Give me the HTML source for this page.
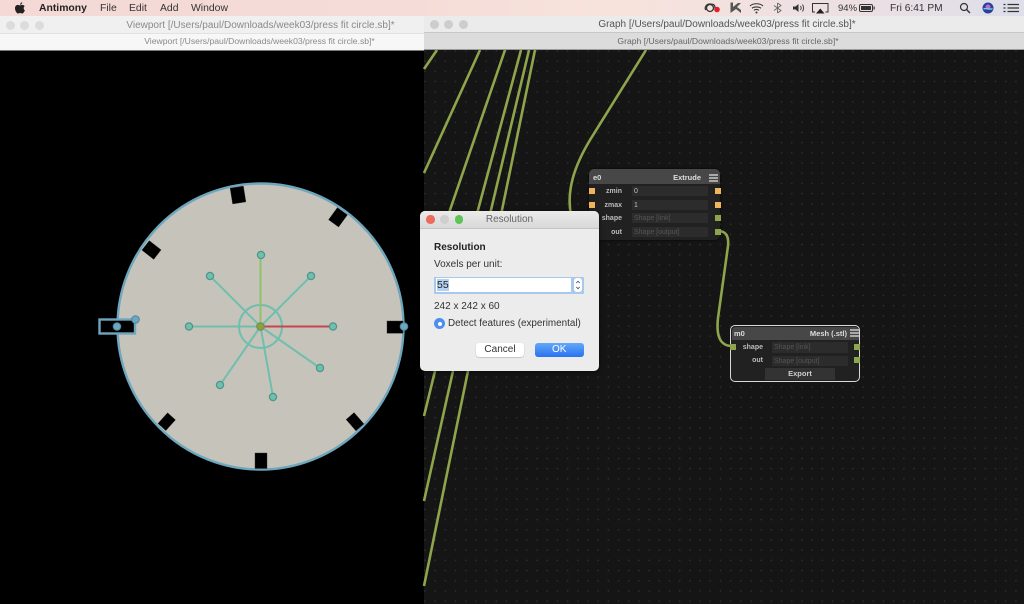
<!DOCTYPE html>
<html><head><meta charset="utf-8"><style>
html,body{margin:0;padding:0;width:1024px;height:604px;overflow:hidden;background:#000;font-family:"Liberation Sans",sans-serif}
#w{position:absolute;left:0;top:0;width:1024px;height:604px;overflow:hidden;filter:blur(.3px)}
.a{position:absolute;white-space:nowrap}
#menu{left:0;top:0;width:1024px;height:16px;background:linear-gradient(90deg,#f4d9d6 0%,#f5dcd8 40%,#f8e3dc 60%,#ebdfe3 85%,#dcdfe9 100%)}
.m{top:2px;font-size:10.4px;line-height:13px;color:#333}
.t{text-align:center;color:#777}
.dot{position:absolute;border-radius:50%}
.lab{position:absolute;text-align:right;font-size:7px;font-weight:bold;color:#bdbdbd;line-height:10px}
.f{position:absolute;background:#2c2c2c;font-size:7px;color:#c0c0c0;line-height:10px;padding-left:2px;box-sizing:border-box}
.f.g{color:#555}
.p{position:absolute;width:6px;height:6px}
.o{background:#efb45e}.gr{background:#8ea54c}
.ham{position:absolute;width:9px;height:2px;background:#a9a9a9}
</style></head><body><div id="w">
<div class="a" style="left:0;top:50px;width:424px;height:554px;background:#000"></div>

<!-- graph -->
<div class="a" style="left:424px;top:50px;width:600px;height:554px;background-color:#151515;background-image:radial-gradient(circle at 1px 1px,#2c2c2c .7px,transparent 1px);background-size:10.2px 10.2px"></div>
<svg class="a" style="left:0;top:0" width="1024" height="604" fill="none">
<g stroke="#8ea54c" stroke-width="2.6">
<path d="M437 50L424 69"/>
<path d="M480 50L424 173"/>
<path d="M505 50L450 210L424 300"/>
<path d="M521 50L478 210L435 371L424 416"/>
<path d="M529 50L491 210L453 371L424 501"/>
<path d="M535 50L502 210L468 371L424 586"/>
<path d="M646 50L590 140C575 165 566 190 571 215"/>
<path d="M718 231C726 231 729 236 728 246L718 318C716 336 720 346 732 346"/>
</g>
</svg>

<!-- viewport drawing -->
<svg class="a" style="left:0;top:50px" width="424" height="554">
<g transform="translate(0,-50)">
<circle cx="260.500" cy="326.500" r="143" fill="#c6c3bb" stroke="#6ea6bd" stroke-width="2.400"/>
<g fill="#000" stroke="#333" stroke-width=".4">
<rect x="-6.700" y="-8" width="13.400" height="16" transform="translate(238 195) rotate(-9)"/>
<rect x="-7.500" y="-6" width="15" height="12" transform="translate(151.500 250) rotate(38)"/>
<rect x="-6.200" y="-7.500" width="12.400" height="15" transform="translate(338 217.300) rotate(36)"/>
<rect x="387" y="321" width="16" height="12.300"/>
<rect x="255" y="453" width="12" height="15.500"/>
<rect x="-7.200" y="-5.300" width="14.400" height="10.600" transform="translate(166.700 421.700) rotate(-48)"/>
<rect x="-7.500" y="-5.300" width="15" height="10.600" transform="translate(355 421.700) rotate(49)"/>
</g>
<rect x="99.500" y="319.500" width="35.500" height="14" fill="#000" stroke="#6ea6bd" stroke-width="2.400"/>
<g stroke="#6fbfae" stroke-width="2" fill="none">
<circle cx="260.500" cy="326.500" r="21.500"/>
<path d="M260.500 326.500L311 276M260.500 326.500L189 326.500M260.500 326.500L320 368M260.500 326.500L273 397M260.500 326.500L220 385M260.500 326.500L210 276"/>
</g>
<path d="M260.500 326.500V255" stroke="#8fc26c" stroke-width="2"/>
<path d="M260.500 326.500H333" stroke="#c8444e" stroke-width="2"/>
<g fill="#6fbfae" stroke="#4f9488" stroke-width="1.200">
<circle cx="261" cy="255" r="3.600"/><circle cx="311" cy="276" r="3.600"/><circle cx="333" cy="326.500" r="3.600"/><circle cx="320" cy="368" r="3.600"/><circle cx="273" cy="397" r="3.600"/><circle cx="220" cy="385" r="3.600"/><circle cx="189" cy="326.500" r="3.600"/><circle cx="210" cy="276" r="3.600"/>
</g>
<circle cx="260.500" cy="326.500" r="3.800" fill="#8f9f3f" stroke="#6c8a50" stroke-width="1"/>
<g fill="#6ea6bd" stroke="#4f87a0" stroke-width="1">
<circle cx="117" cy="326.500" r="3.800"/><circle cx="135.500" cy="319.500" r="3.800"/><circle cx="404" cy="326.500" r="3.800"/>
</g>
</g>
</svg>

<!-- window bars -->
<div class="a" style="left:0;top:16px;width:424px;height:17px;background:#f1f0f0"></div>
<div class="a" style="left:0;top:33px;width:424px;height:17px;background:#f7f7f7;border-top:1px solid #e2e2e2;box-sizing:border-box"></div>
<div class="a" style="left:0;top:50px;width:424px;height:1px;background:#777"></div>
<div class="a t" style="left:0;top:19px;width:521px;font-size:10px;line-height:13px;color:#8a8a8a">Viewport [/Users/paul/Downloads/week03/press fit circle.sb]*</div>
<div class="a t" style="left:0;top:35px;width:519px;font-size:8.600px;line-height:12px;color:#8a8a8a">Viewport [/Users/paul/Downloads/week03/press fit circle.sb]*</div>
<div class="a" style="left:424px;top:16px;width:600px;height:17px;background:#ebebeb"></div>
<div class="a" style="left:424px;top:32px;width:600px;height:18px;background:#dcdcdc;border-top:1px solid #c8c8c8;box-sizing:border-box"></div>
<div class="a" style="left:424px;top:49px;width:600px;height:1px;background:#9a9a9a"></div>
<div class="a t" style="left:424px;top:18px;width:606px;font-size:10px;line-height:13px;color:#555">Graph [/Users/paul/Downloads/week03/press fit circle.sb]*</div>
<div class="a t" style="left:424px;top:35px;width:608px;font-size:8.600px;line-height:12px;color:#666">Graph [/Users/paul/Downloads/week03/press fit circle.sb]*</div>
<div class="dot" style="left:6px;top:21px;width:9px;height:9px;background:#dcdcdc"></div>
<div class="dot" style="left:20px;top:21px;width:9px;height:9px;background:#dcdcdc"></div>
<div class="dot" style="left:35px;top:21px;width:9px;height:9px;background:#dcdcdc"></div>
<div class="dot" style="left:430px;top:20px;width:9px;height:9px;background:#cdcdcd"></div>
<div class="dot" style="left:444px;top:20px;width:9px;height:9px;background:#cdcdcd"></div>
<div class="dot" style="left:459px;top:20px;width:9px;height:9px;background:#cdcdcd"></div>

<!-- menu bar -->
<div class="a" id="menu"></div>
<svg class="a" style="left:14px;top:2px" width="12" height="12" viewBox="0 0 12 12"><path d="M8.200 0.300C7 .5 6 1.500 6.100 2.800 7.300 2.800 8.300 1.600 8.200.3ZM6 3.400C5.200 3.400 4.600 2.900 3.700 2.900 2.200 3 1 4.300 1 6.300 1 8.600 2.600 11.500 4 11.500 4.800 11.500 5.200 11 6.100 11 7 11 7.300 11.500 8.100 11.500 9.400 11.500 10.500 9.200 10.900 8.200 9.500 7.600 9.200 5.100 10.700 4.200 10 3.200 9 2.900 8.200 2.900 7.200 2.900 6.700 3.400 6 3.400Z" fill="#222"/></svg>
<div class="a m" style="left:39px;font-weight:bold;color:#222">Antimony</div>
<div class="a m" style="left:100px">File</div>
<div class="a m" style="left:129px">Edit</div>
<div class="a m" style="left:160px">Add</div>
<div class="a m" style="left:191px">Window</div>
<svg class="a" style="left:700px;top:0" width="324" height="16" fill="none" stroke="#333">
<circle cx="10" cy="8" r="3.500" stroke-width="1.300"/><path d="M6 10C4 8 6 4 10 4S15 5 15 8" stroke-width="1.200"/><circle cx="17" cy="9.500" r="2.800" fill="#e0202a" stroke="none"/>
<path d="M30.500 2.500V13L36 9L41 13V10L37 7L41 3H38L33 7V2.500Z" fill="#555" stroke="none"/>
<path d="M50 6C53 3 60 3 63 6M52 8.300C54 6.500 59 6.500 61 8.300M54 10.300C55.500 9.300 57.500 9.300 59 10.300" stroke-width="1.100"/><circle cx="56.500" cy="12.500" r="1" fill="#333" stroke="none"/>
<path d="M77.500 3V13M74 5.500L81 10.500L77.500 13M74 10.500L81 5.500L77.500 3" stroke="#666" stroke-width=".9"/>
<path d="M93 6.500H95.500L98.500 4V12L95.500 9.500H93Z" fill="#333" stroke="none"/><path d="M100.500 6C101.500 7.500 101.500 8.500 100.500 10M102.500 4.500C104 7 104 9 102.500 11.500" stroke-width=".9"/>
<path d="M115 12H112.500V3.500H128V12H125.500" stroke-width="1"/><path d="M116 13.500L120.300 8.500L124.500 13.500Z" fill="#222" stroke="none"/>
<rect x="159.500" y="4.500" width="13" height="7" rx="1.500" stroke-width="1"/><rect x="161" y="6" width="10" height="4" fill="#333" stroke="none"/><rect x="173.500" y="6.500" width="1.200" height="3" fill="#333" stroke="none"/>
<circle cx="264" cy="7" r="3.500" stroke-width="1.200"/><path d="M266.500 9.500L270 13" stroke-width="1.400"/>
<circle cx="288" cy="8" r="5.500" fill="#2a3f9a" stroke="none"/><circle cx="288" cy="7" r="2.500" fill="#b46fd0" stroke="none"/><path d="M283.500 9C286 7.500 290 10.500 292.500 8.500" stroke="#7fd4ea" stroke-width="1.200"/>
<path d="M307.500 4.500H319M307.500 8H319M307.500 11.500H319" stroke-width="1.200"/><path d="M303.500 4.500H305.500M303.500 8H305.500M303.500 11.500H305.500" stroke-width="1.200"/>
</svg>
<div class="a m" style="left:838px;font-size:9.500px">94%</div>
<div class="a m" style="left:890px;font-size:10.200px">Fri 6:41 PM</div>

<!-- node e0 -->
<div class="a" style="left:589px;top:169px;width:131px;height:71px;background:#212121;border-radius:5px;box-shadow:0 0 2px #000"></div>
<div class="a" style="left:589px;top:169px;width:131px;height:15px;background:#474747;border-radius:5px 5px 0 0"></div>
<div class="a" style="left:593px;top:173px;font-size:7.500px;line-height:9px;font-weight:bold;color:#ddd">e0</div>
<div class="a" style="left:660px;top:173px;width:41px;text-align:right;font-size:7.500px;line-height:9px;font-weight:bold;color:#ddd">Extrude</div>
<div class="ham" style="left:709px;top:174px"></div><div class="ham" style="left:709px;top:177px"></div><div class="ham" style="left:709px;top:180px"></div>
<div class="lab" style="left:590px;top:187px;width:32px">zmin</div>
<div class="lab" style="left:590px;top:201px;width:32px">zmax</div>
<div class="lab" style="left:590px;top:214px;width:32px">shape</div>
<div class="lab" style="left:590px;top:227.500px;width:32px">out</div>
<div class="f" style="left:632px;top:186px;width:76px;height:10px;line-height:11px">0</div>
<div class="f" style="left:632px;top:199.500px;width:76px;height:10px;line-height:11px">1</div>
<div class="f g" style="left:632px;top:213px;width:76px;height:10px;line-height:11px">Shape [link]</div>
<div class="f g" style="left:632px;top:226.500px;width:76px;height:10px;line-height:11px">Shape [output]</div>
<div class="p o" style="left:589px;top:188px"></div><div class="p o" style="left:589px;top:201.500px"></div>
<div class="p o" style="left:715px;top:188px"></div><div class="p o" style="left:715px;top:201.500px"></div>
<div class="p gr" style="left:715px;top:215px"></div><div class="p gr" style="left:715px;top:228.500px"></div>

<!-- node m0 -->
<div class="a" style="left:730px;top:325px;width:130px;height:57px;background:#212121;border-radius:5px;border:1.500px solid #d8d8d8;box-sizing:border-box"></div>
<div class="a" style="left:731.500px;top:326.500px;width:127px;height:13.500px;background:#474747;border-radius:4px 4px 0 0"></div>
<div class="a" style="left:734px;top:329px;font-size:7.500px;line-height:9px;font-weight:bold;color:#ddd">m0</div>
<div class="a" style="left:790px;top:329px;width:57px;text-align:right;font-size:7.500px;line-height:9px;font-weight:bold;color:#ddd">Mesh (.stl)</div>
<div class="ham" style="left:850px;top:329px"></div><div class="ham" style="left:850px;top:332px"></div><div class="ham" style="left:850px;top:335px"></div>
<div class="lab" style="left:732px;top:343px;width:31px">shape</div>
<div class="lab" style="left:732px;top:356px;width:31px">out</div>
<div class="f g" style="left:772px;top:342px;width:76px;height:10.500px;line-height:11px">Shape [link]</div>
<div class="f g" style="left:772px;top:355.500px;width:76px;height:10.500px;line-height:11px">Shape [output]</div>
<div class="f" style="left:765px;top:368px;width:70px;height:12px;text-align:center;padding:0;line-height:12px;font-weight:bold;font-size:7.500px;background:#333;color:#ccc">Export</div>
<div class="p gr" style="left:730px;top:343.500px"></div>
<div class="p gr" style="left:854px;top:343.500px"></div><div class="p gr" style="left:854px;top:357px"></div>

<!-- dialog -->
<div class="a" style="left:420px;top:211px;width:179px;height:160px;background:#ececec;border-radius:5px;box-shadow:0 1px 5px rgba(0,0,0,.6)"></div>
<div class="a" style="left:420px;top:211px;width:179px;height:18px;background:linear-gradient(#ebebeb,#d8d8d8);border-radius:5px 5px 0 0;border-bottom:1px solid #c4c4c4;box-sizing:border-box"></div>
<div class="dot" style="left:426px;top:215px;width:8.500px;height:8.500px;background:#ed6a5e"></div>
<div class="dot" style="left:440px;top:215px;width:8.500px;height:8.500px;background:#cfcfcf"></div>
<div class="dot" style="left:454.500px;top:215px;width:8.500px;height:8.500px;background:#5fc454"></div>
<div class="a" style="left:420px;top:213px;width:179px;text-align:center;font-size:10px;line-height:13px;color:#666">Resolution</div>
<div class="a" style="left:434px;top:241px;font-size:10px;line-height:13px;font-weight:bold;color:#222">Resolution</div>
<div class="a" style="left:434px;top:258px;font-size:10px;line-height:13px;color:#333">Voxels per unit:</div>
<div class="a" style="left:434px;top:276.500px;width:150px;height:17px;background:#a9c8ee;border-radius:1px"></div>
<div class="a" style="left:435.500px;top:278px;width:135.500px;height:14px;background:#fff"></div>
<div class="a" style="left:437px;top:279px;width:12px;height:12px;background:#b4d0f2"></div>
<div class="a" style="left:437px;top:279px;font-size:10.500px;line-height:12px;color:#222">55</div>
<div class="a" style="left:574px;top:278px;width:8px;height:14px;background:#fff;border-radius:3px"></div>
<svg class="a" style="left:574px;top:278px" width="8" height="14" fill="none" stroke="#444" stroke-width=".8"><path d="M2.300 5L4 3.300L5.700 5M2.300 9L4 10.700L5.700 9"/></svg>
<div class="a" style="left:434px;top:300px;font-size:10px;line-height:13px;color:#333">242 x 242 x 60</div>
<div class="dot" style="left:434px;top:318px;width:11px;height:11px;background:#4c8ff0"></div>
<div class="dot" style="left:437.500px;top:321.500px;width:4px;height:4px;background:#fff"></div>
<div class="a" style="left:448px;top:317px;font-size:9.900px;line-height:13px;color:#333">Detect features (experimental)</div>
<div class="a" style="left:476px;top:343px;width:48px;height:14px;background:#fff;border-radius:3px;box-shadow:0 .5px 1px rgba(0,0,0,.3);text-align:center;font-size:10px;line-height:14px;color:#333">Cancel</div>
<div class="a" style="left:535px;top:343px;width:48.500px;height:14px;background:linear-gradient(#63a8f8,#2a72f0);border-radius:3px;text-align:center;font-size:10px;line-height:14px;color:#fff">OK</div>
</div></body></html>
